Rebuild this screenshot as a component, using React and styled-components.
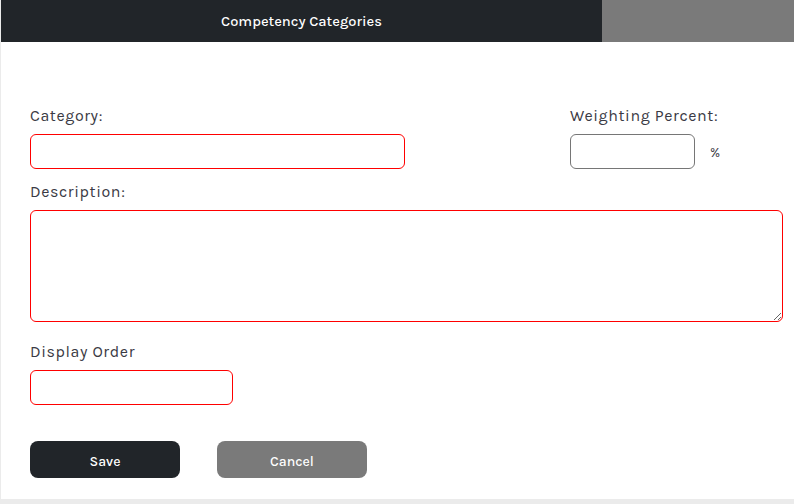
import React from "react";
import styled, { createGlobalStyle } from "styled-components";

const Global = createGlobalStyle`
  html, body { margin: 0; padding: 0; background: #ebebeb; }
  body { font-family: "Karla", "Noto Sans", Inter, sans-serif; }
  * { box-sizing: border-box; }
`;

const Panel = styled.div`
  margin-left: 1px;
  height: 499px;
  background: #fff;
  display: flex;
  flex-direction: column;
`;

const Header = styled.div`
  display: flex;
  height: 42px;
`;

const Title = styled.div`
  width: 601px;
  background: #212529;
  color: #fff;
  display: flex;
  align-items: center;
  justify-content: center;
  font-size: 14.7px;
  font-weight: 500;
  padding-top: 1px;
`;

const HeaderSide = styled.div`
  flex: 1;
  background: #7a7a7a;
`;

const Form = styled.div`
  padding: 64px 11px 0 29px;
  display: flex;
  flex-direction: column;
`;

const Row = styled.div`
  display: flex;
  justify-content: space-between;
`;

const Field = styled.div`
  display: flex;
  flex-direction: column;
  margin-top: ${(p) => p.$top || 0}px;
`;

const Label = styled.label`
  font-size: 16px;
  line-height: 20px;
  color: #3a3a44;
  letter-spacing: 0.6px;
  margin-bottom: ${(p) => p.$gap || 8}px;
`;

const Input = styled.input`
  width: ${(p) => p.$w}px;
  height: 35px;
  border: 1px solid ${(p) => (p.$neutral ? "#767676" : "#ff0000")};
  border-radius: 6px;
  background: #fff;
  outline: none;
  font: inherit;
  padding: 0 8px;
`;

const TextArea = styled.textarea`
  width: 753px;
  height: 112px;
  border: 1px solid #ff0000;
  border-radius: 6px;
  outline: none;
  font: inherit;
  padding: 6px 8px;
  display: block;
`;

const Inline = styled.div`
  display: flex;
  align-items: center;
`;

const Unit = styled.span`
  font-size: 14px;
  color: #3a3a44;
  margin-left: 15px;
  padding-top: 1px;
`;

const Buttons = styled.div`
  display: flex;
  gap: 37px;
  margin-top: 36px;
`;

const Button = styled.button`
  width: 150px;
  height: 37px;
  border: none;
  border-radius: 8px;
  background: ${(p) => (p.$secondary ? "#7a7a7a" : "#212529")};
  color: #fff;
  font-family: inherit;
  font-size: 14px;
  font-weight: 500;
  cursor: pointer;
  padding-top: 5px;
`;

export default function App() {
  return (
    <>
      <Global />
      <Panel>
        <Header>
          <Title>Competency Categories</Title>
          <HeaderSide />
        </Header>
        <Form>
          <Row>
            <Field>
              <Label>Category:</Label>
              <Input $w={375} />
            </Field>
            <Field style={{ width: 213 }}>
              <Label>Weighting Percent:</Label>
              <Inline>
                <Input $w={125} $neutral />
                <Unit>%</Unit>
              </Inline>
            </Field>
          </Row>
          <Field $top={13}>
            <Label>Description:</Label>
            <TextArea />
          </Field>
          <Field $top={20}>
            <Label $gap={8}>Display Order</Label>
            <Input $w={203} />
          </Field>
          <Buttons>
            <Button>Save</Button>
            <Button $secondary>Cancel</Button>
          </Buttons>
        </Form>
      </Panel>
    </>
  );
}
